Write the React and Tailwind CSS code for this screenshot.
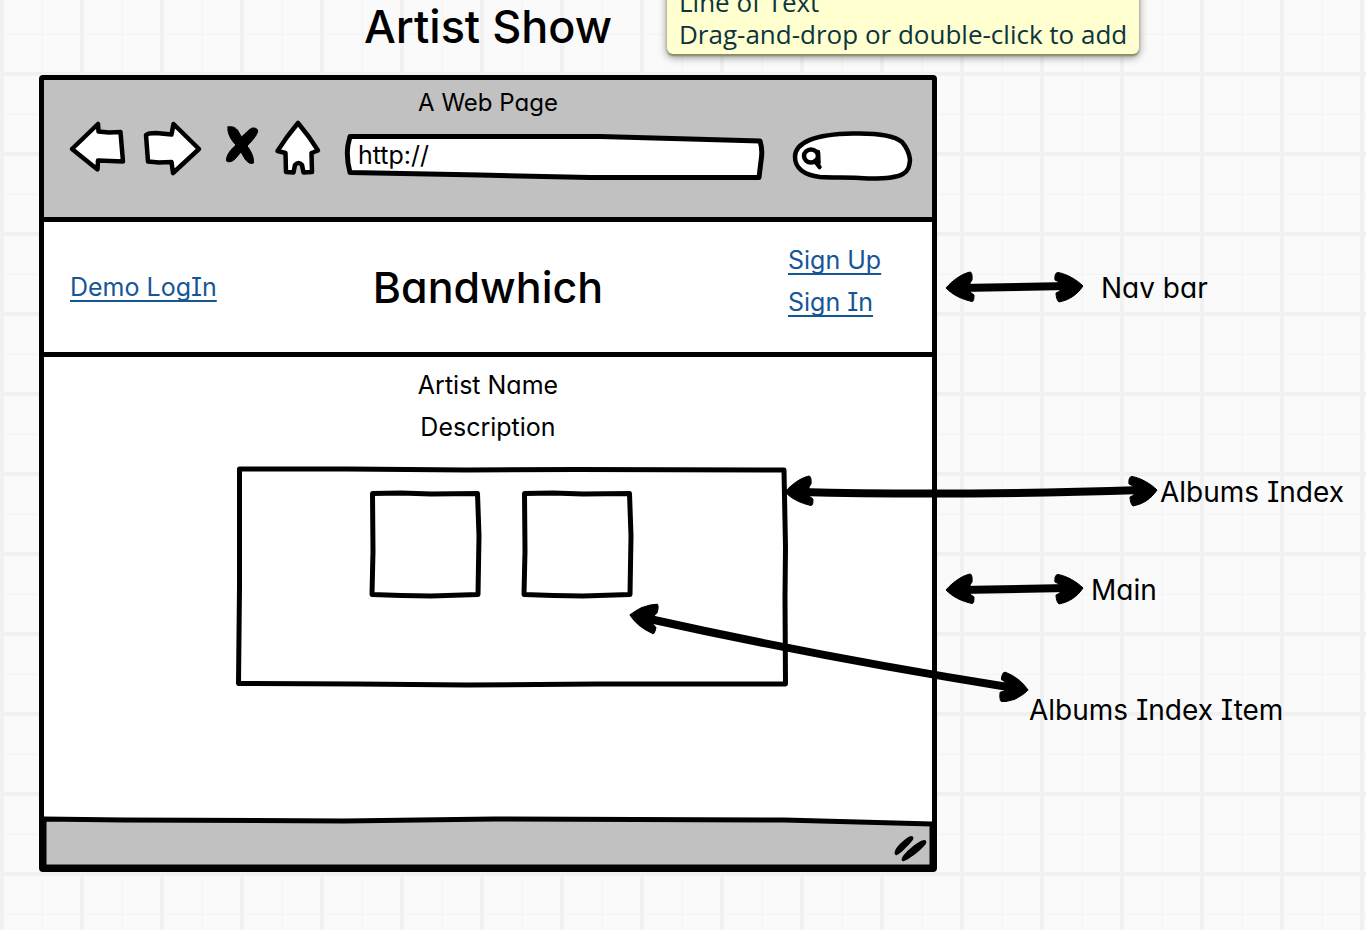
import React from 'react';

const SKETCH_FONT =
  "font-['Inter','Lato',sans-serif] [font-feature-settings:'cv11','cv08']";

function SketchBox({ d, viewBox, fill = 'none', strokeWidth = 5 }) {
  return (
    <svg
      aria-hidden="true"
      viewBox={viewBox}
      preserveAspectRatio="none"
      className="pointer-events-none absolute inset-0 h-full w-full overflow-visible"
    >
      <path
        d={d}
        fill={fill}
        stroke="#000"
        strokeWidth={strokeWidth}
        strokeLinejoin="round"
        vectorEffect="non-scaling-stroke"
      />
    </svg>
  );
}

function ToolIcon({ viewBox, children }) {
  return (
    <svg
      aria-hidden="true"
      viewBox={viewBox}
      className="block h-full w-full overflow-visible"
      fill="#fff"
      stroke="#000"
      strokeWidth="4.5"
      strokeLinejoin="round"
      strokeLinecap="round"
    >
      {children}
    </svg>
  );
}

function Toolbar() {
  return (
    <div className="flex h-16 items-stretch pr-5 pl-6">
      <button type="button" aria-label="Back" className="w-[58px] shrink-0">
        <ToolIcon viewBox="68 118 58 64">
          <path d="M72 149L98 124L98.500 131.500L109 132.500L120.500 132L121.500 144L123 161.500L98 160.500L97.500 169.500Z" />
        </ToolIcon>
      </button>
      <button type="button" aria-label="Forward" className="ml-4 w-[60px] shrink-0">
        <ToolIcon viewBox="142 118 60 64">
          <path d="M146 135L149 133.500L156 133L171.500 134.500L173.500 124L199 149L173 173L171.500 162L159 162.500L148 161.500Z" />
        </ToolIcon>
      </button>
      <button type="button" aria-label="Stop" className="ml-6 w-8 shrink-0">
        <ToolIcon viewBox="226 118 32 64">
          <path
            fill="#000"
            strokeWidth="1"
            d="M228 127C231 126 235 127 237.500 130L241.500 137L249 130C252 127 256 127.500 257.500 130C258.500 133 254 139 247 146C251 151 254 157 253.500 163C251 164.500 248 163 245 159L241 152L235 159C232 162 228 162.500 226.500 161C226 156 230 150 236 145C231 140 227 133 228 127Z"
          />
        </ToolIcon>
      </button>
      <button type="button" aria-label="Home" className="ml-4 w-12 shrink-0">
        <ToolIcon viewBox="274 118 48 64">
          <path d="M298 123L309 137L318 150.500L311.500 153L312 172L303.500 172.500L302 165Q298.500 161 295 165L293.500 172.500L286 172L285.500 153L277.500 151L287 137Z" />
        </ToolIcon>
      </button>
      <div className="relative ml-6 flex min-w-0 flex-1">
        <SketchBox
          viewBox="346 118 416 64"
          fill="#fff"
          d="M350 136.500L480 136.500L600 136.500L690 139L760 141Q763 150 761 161L759 177.500L590 177.500L480 175L350 172.500Q346 158 348 145Z"
        />
        <input
          type="text"
          aria-label="Address"
          defaultValue="http://"
          className="relative mt-5 h-9 w-full min-w-0 bg-transparent pl-3 text-[25px] outline-none"
        />
      </div>
      <div className="relative ml-7 flex w-[122px] shrink-0">
        <SketchBox
          viewBox="790 118 122 64"
          fill="#fff"
          strokeWidth={4.5}
          d="M795 157C795 143 814 134 853 133.500C877 133 895 136 902 142Q909 150 910 160C909 172 906 179 868 178.500C846 177 838 178 820 177C804 175 795 168 795 157Z"
        />
        <svg
          aria-hidden="true"
          viewBox="790 118 122 64"
          className="pointer-events-none absolute inset-0 h-full w-full"
          fill="none"
          stroke="#000"
          strokeWidth="4.500"
          strokeLinecap="round"
        >
          <ellipse cx="811" cy="156" rx="7" ry="6.500" />
          <path d="M815 161L819.500 167M818 152L818.500 163" />
        </svg>
        <input
          type="search"
          aria-label="Search"
          className="relative mt-5 ml-9 h-9 w-16 bg-transparent text-[25px] outline-none"
        />
      </div>
    </div>
  );
}

function AlbumTile() {
  return (
    <li className="relative h-[106px] w-[110px]">
      <SketchBox
        viewBox="0 0 110 106"
        d="M1.500 2.500L30 2L60 3L106.500 2.500L108 45L107 103.500L60 105L30 104.500L1 103.500L2 60Z"
      />
    </li>
  );
}

function AlbumsIndex() {
  return (
    <ul className="relative mt-[19px] ml-[193px] flex h-[220px] w-[550px] gap-[42px] pt-6 pl-[134px]">
      <SketchBox
        viewBox="0 0 550 220"
        d="M2.500 2L110 2L230 3L340 2.500L547 3L548.500 80L548 130L548.500 217L360 217L230 218L120 217L1.500 216.500L2.500 120Z"
      />
      <AlbumTile />
      <AlbumTile />
    </ul>
  );
}

function Annotations() {
  const leftHead =
    'M0 0C6 -7 15 -14 24 -16C26 -16 26.500 -11 26 -8L24 -5L24 4L28 7C28 10 28 13.500 26 13.500C15 11 7 7 0 0Z';
  const rightHead =
    'M0 0C-6 -6 -16 -12 -25 -13.500C-28 -13.500 -28.500 -9 -28 -6L-24 -4L-23 5L-27 7C-27 10 -26 15 -24 16C-14 14 -6 9 0 0Z';
  return (
    <svg
      aria-hidden="true"
      width="1366"
      height="930"
      viewBox="0 0 1366 930"
      className="pointer-events-none absolute top-0 left-0"
    >
      <g fill="none" stroke="#000" strokeWidth="8">
        <path d="M960 288L1068 286" />
        <path d="M800 492Q950 496 1142 490" />
        <path d="M960 590L1068 588" />
        <path d="M645 618Q820 657 1014 688" />
      </g>
      <g stroke="#000" strokeWidth="1" strokeLinejoin="round">
        <path d={leftHead} transform="translate(946 288)" />
        <path d={rightHead} transform="translate(1083 286)" />
        <path d={leftHead} transform="translate(785 492)" />
        <path d={rightHead} transform="translate(1157 490)" />
        <path d={leftHead} transform="translate(946 590)" />
        <path d={rightHead} transform="translate(1083 588)" />
        <path d={leftHead} transform="translate(630 615) rotate(12)" />
        <path d={rightHead} transform="translate(1028 690) rotate(10)" />
      </g>
    </svg>
  );
}

const NOTE = 'absolute text-[28px] leading-8 whitespace-nowrap';
const LINK =
  'text-[25px] leading-[42px] text-[#165697] underline decoration-2 underline-offset-4 [text-decoration-skip-ink:none]';

export default function App() {
  return (
    <div
      className={`relative min-h-screen overflow-hidden bg-[#fafafa] bg-[linear-gradient(90deg,#f1f1f1_4px,transparent_4px,transparent_42px,#f4f4f4_42px,#f4f4f4_43px,transparent_43px),linear-gradient(180deg,#f1f1f1_4px,transparent_4px,transparent_42px,#f4f4f4_42px,#f4f4f4_43px,transparent_43px)] bg-[length:80px_80px] bg-[position:0_72px] text-black ${SKETCH_FONT}`}
    >
      <div className="ml-[39px] w-full max-w-[898px]">
        <h1 className="flex h-[75px] items-start justify-center text-[45px] leading-[54px] font-medium">
          Artist Show
        </h1>

        <section aria-label="Browser window" className="rounded-sm border-[5px] border-black bg-white">
          <header className="h-[137px] bg-[#c1c1c1]">
            <p className="pt-2 text-center text-[24px] leading-[30px]">A Web Page</p>
            <Toolbar />
          </header>

          <nav className="grid h-[140px] grid-cols-[1fr_auto_1fr] items-center border-y-[5px] border-black px-[26px]">
            <div>
              <a href="#demo" className={LINK}>
                Demo LogIn
              </a>
            </div>
            <span className="text-[43px] leading-[54px] font-medium">Bandwhich</span>
            <div className="flex w-[118px] flex-col items-start justify-self-end pb-3">
              <a href="#signup" className={LINK}>
                Sign Up
              </a>
              <a href="#signin" className={LINK}>
                Sign In
              </a>
            </div>
          </nav>

          <main className="h-[460px] pt-[7px]">
            <h2 className="text-center text-[25px] leading-[42px]">Artist Name</h2>
            <p className="text-center text-[25px] leading-[42px]">Description</p>
            <AlbumsIndex />
          </main>

          <footer className="relative flex h-[50px] justify-end">
            <SketchBox
              viewBox="0 0 888 50"
              fill="#c1c1c1"
              d="M0 2L80 3L300 4L450 2L740 3L888 7L888 50L0 50Z"
            />
            <svg
              aria-hidden="true"
              width="40"
              height="50"
              viewBox="892 817 40 50"
              className="relative"
            >
              <path d="M895 851C896 847 906 837 911 836C914 836 914 839 912 841C908 846 900 854 897 855C895 856 894 853 895 851Z" />
              <path d="M902 858C904 853 918 841 924 840C927 840 927 843 925 845C920 851 908 860 904 861C902 862 901 860 902 858Z" />
            </svg>
          </footer>
        </section>
      </div>

      <Annotations />
      <p className={`${NOTE} top-[272px] left-[1101px]`}>Nav bar</p>
      <p className={`${NOTE} top-[476px] left-[1160px]`}>Albums Index</p>
      <p className={`${NOTE} top-[574px] left-[1091px]`}>Main</p>
      <p className={`${NOTE} top-[694px] left-[1029px]`}>Albums Index Item</p>

      <div
        role="tooltip"
        className="absolute -top-[18px] left-[667px] rounded-md bg-[#ffffcf] px-3 py-1 font-['Open_Sans','Noto_Sans',sans-serif] text-[26px] leading-8 whitespace-nowrap text-[#0c3440] shadow-[0_2px_2px_#8b8b66,0_3px_8px_rgba(0,0,0,0.45)]"
      >
        <p>Line of Text</p>
        <p>Drag-and-drop or double-click to add</p>
      </div>
    </div>
  );
}
